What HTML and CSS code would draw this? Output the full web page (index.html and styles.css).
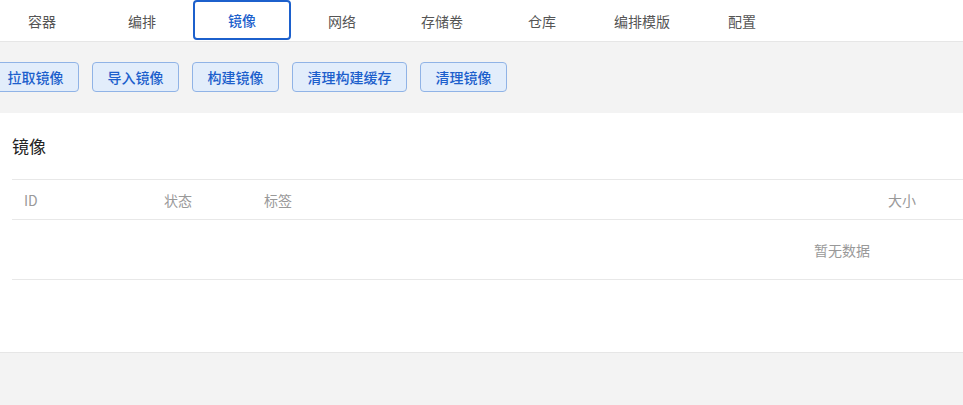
FILE: index.html
```html
<!DOCTYPE html>
<html lang="zh-CN">
<head>
  <meta charset="UTF-8" />
  <meta name="viewport" content="width=device-width, initial-scale=1.0"/>
  <title>镜像</title>
  <link rel="stylesheet" href="styles.css">
</head>
<body>
  <div class="app">
    <div class="tabs">
      <div class="tab">容器</div>
      <div class="tab">编排</div>
      <div class="tab active">镜像</div>
      <div class="tab">网络</div>
      <div class="tab">存储卷</div>
      <div class="tab">仓库</div>
      <div class="tab">编排模版</div>
      <div class="tab">配置</div>
    </div>

    <div class="toolbar">
      <button class="btn">拉取镜像</button>
      <button class="btn">导入镜像</button>
      <button class="btn">构建镜像</button>
      <button class="btn">清理构建缓存</button>
      <button class="btn">清理镜像</button>
    </div>

    <div class="card">
      <h2 class="card-title">镜像</h2>
      <table class="table">
        <thead>
          <tr>
            <th class="col-id">ID</th>
            <th class="col-status">状态</th>
            <th class="col-tag">标签</th>
            <th>大小</th>
          </tr>
        </thead>
        <tbody>
          <tr>
            <td colspan="4" class="empty">暂无数据</td>
          </tr>
        </tbody>
      </table>
    </div>
  </div>
</body>
</html>
```

FILE: styles.css
```css
* {
  margin: 0;
  padding: 0;
  box-sizing: border-box;
}

body {
  font-family: "Noto Sans CJK SC", "Noto Sans", sans-serif;
  background: #f3f3f3;
  color: #333;
  overflow: hidden;
}

.app {
  margin-left: -8px;
  width: 1700px;
}

.tabs {
  display: flex;
  height: 42px;
  background: white;
  border-bottom: 1px solid #e6e6e6;
}

.tab {
  width: 98px;
  height: 41px;
  margin: 0 1px;
  display: flex;
  align-items: center;
  justify-content: center;
  font-size: 14px;
  color: #555;
}

.tab.active {
  height: 40px;
  border: 2px solid #1c60cc;
  border-radius: 4px;
  color: #1c60cc;
  font-weight: 500;
}

.toolbar {
  display: flex;
  gap: 13px;
  padding: 20px 0 21px;
}

.btn {
  height: 30px;
  padding: 0 14.5px;
  font-family: inherit;
  font-size: 14px;
  font-weight: 500;
  color: #1c5fcc;
  background: #e2edfb;
  border: 1px solid #90b3e6;
  border-radius: 4px;
}

.card {
  background: white;
  padding: 0 20px 72px;
  border-bottom: 1px solid #e6e6e6;
}

.card-title {
  font-size: 17px;
  font-weight: 400;
  color: #222;
  line-height: 26px;
  padding-top: 20px;
  margin-bottom: 20px;
}

.table {
  width: 1660px;
  border-collapse: collapse;
  border-top: 1px solid #e8e8e8;
}

.table th {
  height: 40px;
  padding: 0 12px;
  text-align: left;
  font-size: 14px;
  font-weight: 400;
  color: #999;
  border-bottom: 1px solid #e8e8e8;
}

.col-id {
  width: 140px;
}

.col-status {
  width: 100px;
}

.col-tag {
  width: 624px;
}

.empty {
  height: 60px;
  text-align: center;
  font-size: 14px;
  color: #999;
  border-bottom: 1px solid #e8e8e8;
}
```
